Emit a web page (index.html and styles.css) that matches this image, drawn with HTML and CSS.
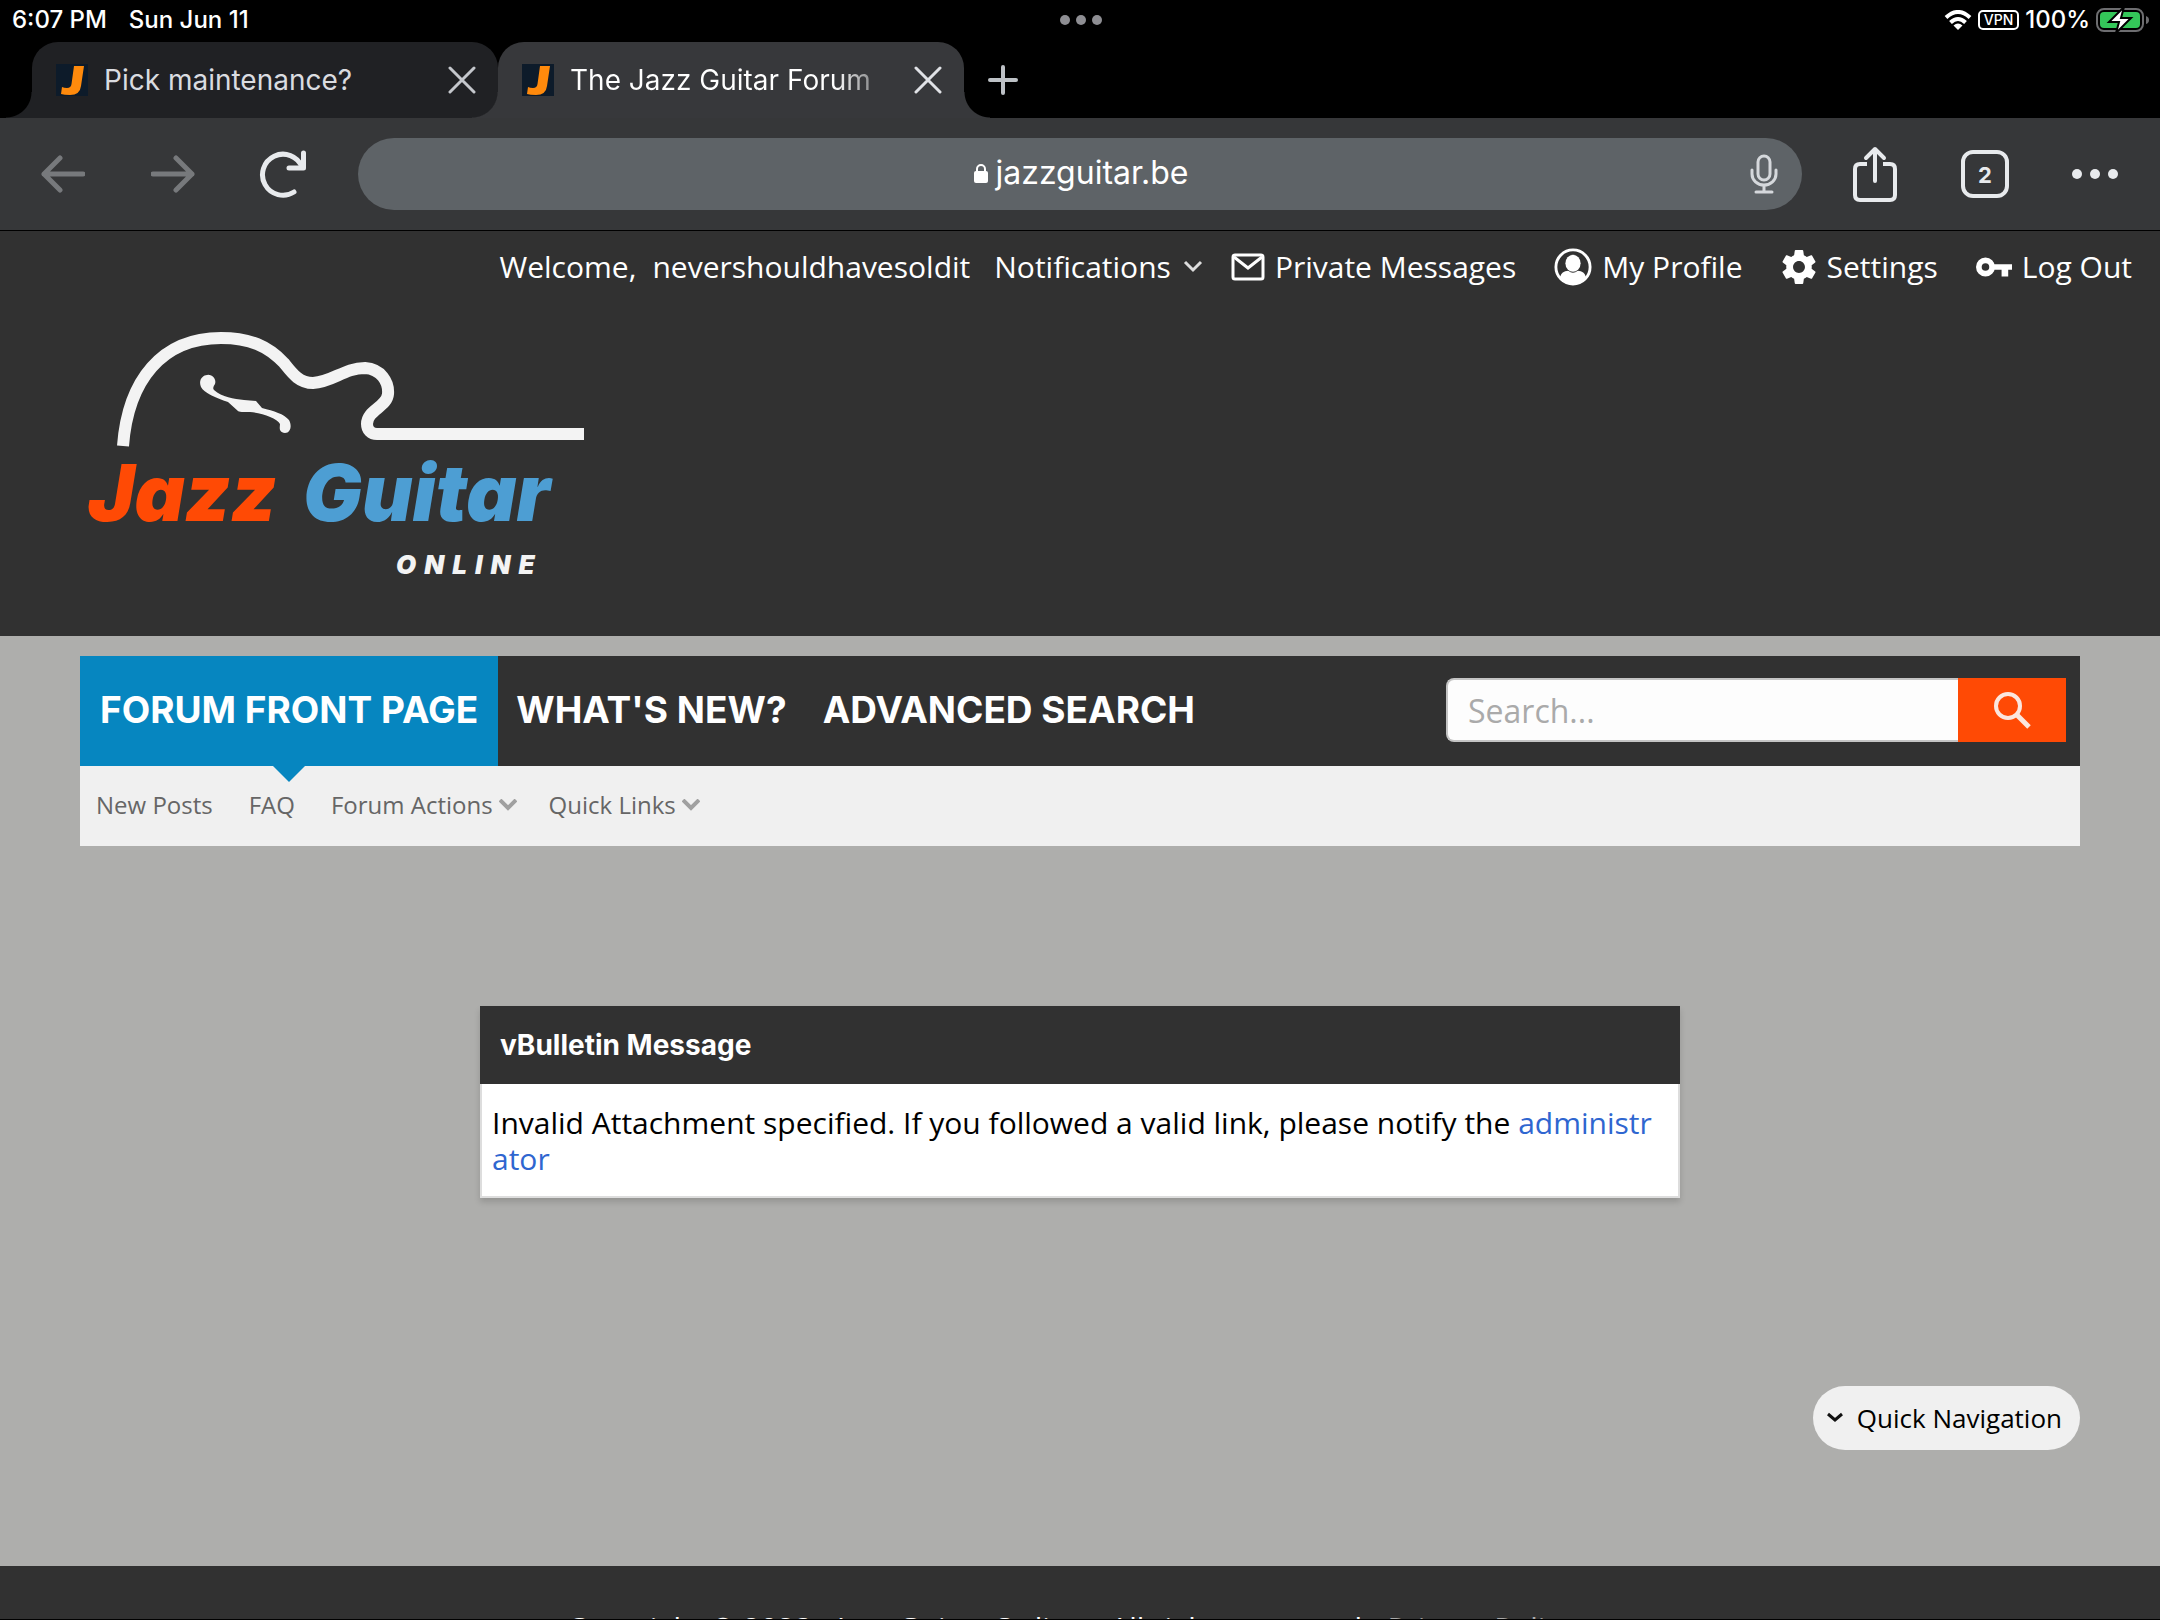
FILE: index.html
```html
<!DOCTYPE html>
<html lang="en">
<head>
<meta charset="utf-8">
<title>The Jazz Guitar Forum</title>
<meta name="viewport" content="width=device-width, initial-scale=1">
<link rel="stylesheet" href="styles.css">
</head>
<body>
<div class="device">
  <div class="status">
    <div class="status-left"><span>6:07 PM</span><span>Sun Jun 11</span></div>
    <svg class="multitask" viewBox="0 0 44 12" width="44" height="12" fill="#8e8e93"><circle cx="6" cy="6" r="5"/><circle cx="22" cy="6" r="5"/><circle cx="38" cy="6" r="5"/></svg>
    <div class="status-right">
      <svg viewBox="0 0 28 20" width="28" height="20" fill="none" stroke="#fff" stroke-width="4"><path d="M2 7.500Q14-3.500 26 7.500"/><path d="M6.500 12.500Q14 5.500 21.500 12.500"/><path d="M14 20l-4.500-4.500q4.500-4 9 0z" fill="#fff" stroke="none"/></svg>
      <span class="vpn">VPN</span>
      <span>100%</span>
      <svg viewBox="0 0 54 26" width="54" height="26"><rect x="1" y="2" width="46" height="22" rx="7" fill="none" stroke="#6d6d70" stroke-width="2"/><rect x="4" y="5" width="40" height="16" rx="4" fill="#34c759"/><path d="M50 9q3 1 3 4t-3 4z" fill="#6d6d70"/><path d="M28 0L13 15h10l-3 11 15-15H25z" fill="#fff" stroke="#000" stroke-width="2"/></svg>
    </div>
  </div>

  <div class="tabs">
    <div class="tab tab-first">
      <svg class="favicon" viewBox="0 0 32 32"><path fill="#0d1b2a" d="M0 0h32v32H0z"/><path fill="#ff8a0c" d="M18 2h10l-3 20q-1 9-11 9-6 0-9-1l1-7q2 1 5 1 4 0 4.500-4z"/></svg>
      <span class="tab-title">Pick maintenance?</span>
      <button class="icon-btn" aria-label="Close tab"><svg viewBox="0 0 28 28" width="28" height="28" fill="none" stroke="#c4c7cc" stroke-width="3" stroke-linecap="round"><path d="M2 2l24 24M26 2L2 26"/></svg></button>
    </div>
    <div class="tab tab-active">
      <svg class="favicon" viewBox="0 0 32 32"><path fill="#0d1b2a" d="M0 0h32v32H0z"/><path fill="#ff8a0c" d="M18 2h10l-3 20q-1 9-11 9-6 0-9-1l1-7q2 1 5 1 4 0 4.500-4z"/></svg>
      <span class="tab-title">The Jazz Guitar Forum</span>
      <button class="icon-btn" aria-label="Close tab"><svg viewBox="0 0 28 28" width="28" height="28" fill="none" stroke="#e0e2e6" stroke-width="3" stroke-linecap="round"><path d="M2 2l24 24M26 2L2 26"/></svg></button>
    </div>
    <button class="icon-btn new-tab" aria-label="New tab"><svg viewBox="0 0 30 30" width="30" height="30" fill="none" stroke="#bdc1c6" stroke-width="4" stroke-linecap="round"><path d="M15 2v26M2 15h26"/></svg></button>
  </div>

  <div class="toolbar">
    <button class="icon-btn tool" aria-label="Back"><svg viewBox="0 0 44 40" width="44" height="40" fill="none" stroke="#77797c" stroke-width="5" stroke-linecap="round" stroke-linejoin="round"><path d="M42 20H3M19 4L3 20l16 16"/></svg></button>
    <button class="icon-btn tool" aria-label="Forward"><svg viewBox="0 0 44 40" width="44" height="40" fill="none" stroke="#77797c" stroke-width="5" stroke-linecap="round" stroke-linejoin="round"><path d="M2 20h39M25 4l16 16-16 16"/></svg></button>
    <button class="icon-btn tool" aria-label="Reload"><svg viewBox="0 0 48 48" width="48" height="48" fill="none" stroke="#e8eaed" stroke-width="5" stroke-linecap="round" stroke-linejoin="round"><path d="M35 42A20.500 20.500 0 1 1 43 17"/><path d="M44.500 3v15H30"/></svg></button>
    <div class="omnibox">
      <span class="address"><svg viewBox="0 0 14 20" width="14" height="20"><rect x="0" y="8" width="14" height="12" rx="2" fill="#fff"/><path d="M3 9V6a4 4 0 0 1 8 0v3" fill="none" stroke="#fff" stroke-width="2"/></svg>jazzguitar.be</span>
      <button class="icon-btn mic" aria-label="Voice search"><svg viewBox="0 0 28 40" width="28" height="40" fill="none" stroke="#d5d8dc" stroke-width="3" stroke-linecap="round"><rect x="8" y="2" width="12" height="24" rx="6"/><path d="M2 16v4a12 11 0 0 0 24 0v-4M14 31v7M6 38h16"/></svg></button>
    </div>
    <button class="icon-btn tool" aria-label="Share"><svg viewBox="0 0 44 56" width="44" height="56" fill="none" stroke="#e8eaed" stroke-width="4" stroke-linecap="round" stroke-linejoin="round"><path d="M14 18H7q-5 0-5 5v26q0 5 5 5h30q5 0 5-5V23q0-5-5-5h-7" stroke-linecap="butt"/><path d="M22 35V3M13 12l9-9 9 9"/></svg></button>
    <button class="icon-btn tool" aria-label="2 open tabs"><span class="count">2</span></button>
    <button class="icon-btn tool" aria-label="Menu"><svg viewBox="0 0 46 10" width="46" height="10" fill="#e8eaed"><circle cx="5" cy="5" r="5"/><circle cx="23" cy="5" r="5"/><circle cx="41" cy="5" r="5"/></svg></button>
  </div>

  <div class="page">
    <header class="header">
      <nav class="user-links" aria-label="Account">
        <span class="welcome">Welcome, <a href="#">nevershouldhavesoldit</a></span>
        <a class="notes" href="#">Notifications<svg viewBox="0 0 20 14" width="20" height="14" fill="none" stroke="#ddd" stroke-width="3"><path d="M2 2l8 8 8-8"/></svg></a>
        <a class="user-link" href="#"><svg viewBox="0 0 34 28" width="34" height="28" fill="none" stroke="#fff" stroke-width="3"><rect x="2" y="2" width="30" height="24" rx="2"/><path d="M3 4l14 11L31 4"/></svg>Private Messages</a>
        <a class="user-link" href="#"><svg viewBox="0 0 40 40" width="38" height="40"><circle cx="20" cy="20" r="18" fill="none" stroke="#fff" stroke-width="3"/><ellipse cx="20" cy="16" rx="8" ry="9" fill="#fff"/><path d="M6 31q2-7 9-7 5 4 10 0 7 0 9 7-5 7-14 7T6 31z" fill="#fff"/></svg>My Profile</a>
        <a class="user-link" href="#"><svg viewBox="2 2 20 20" width="36" height="34" fill="#fff"><path d="M19.430 12.980c.04-.32.070-.64.070-.98s-.03-.66-.07-.98l2.110-1.650c.19-.15.240-.42.120-.64l-2-3.460c-.12-.22-.39-.3-.61-.22l-2.490 1c-.52-.4-1.080-.73-1.690-.98l-.38-2.650C14.460 2.180 14.250 2 14 2h-4c-.25 0-.46.180-.49.420l-.38 2.650c-.61.250-1.170.590-1.690.980l-2.490-1c-.23-.09-.49 0-.61.220l-2 3.460c-.13.220-.07.490.120.640l2.110 1.650c-.04.320-.07.650-.07.980s.03.660.070.980l-2.110 1.650c-.19.150-.24.420-.12.640l2 3.460c.12.220.390.300.610.220l2.490-1c.52.400 1.080.730 1.690.980l.38 2.650c.03.240.240.420.490.420h4c.25 0 .46-.18.490-.42l.38-2.650c.61-.25 1.170-.59 1.690-.98l2.490 1c.23.090.49 0 .61-.22l2-3.460c.12-.22.070-.49-.12-.64l-2.110-1.650zM12 15.500c-1.930 0-3.500-1.570-3.500-3.500s1.570-3.500 3.500-3.500 3.500 1.570 3.500 3.500-1.570 3.500-3.500 3.500z"/></svg>Settings</a>
        <a class="user-link" href="#"><svg viewBox="0 0 38 20" width="36" height="20"><circle cx="10" cy="10" r="7" fill="none" stroke="#fff" stroke-width="6"/><path d="M18 7h20v6h-4v7h-7v-7h-9z" fill="#fff"/></svg>Log Out</a>
      </nav>
      <a class="logo" href="#" aria-label="Jazz Guitar Online">
        <svg viewBox="80 326 520 260" width="520" height="260">
          <path d="M123 446C128 380 162 338 221 338C250 338 268 346 284 363C292 373 299 383 313 383C333 382 344 368 365 368C381 369 389 382 388 394C387 407 367 410 367 424C367 430 371 434 377 434H584" fill="none" stroke="#f3f3f3" stroke-width="12"/>
          <path d="M207 375a7 7 0 0 1 8 9q-3 4-1 6c8 7 20 9 30 10l12 1 6 7c12 3 22 6 27 12 3 5 2 13-4 13-7-1-5-6-5-9-3-6-18-11-30-12-6 0-12 0-12-1l-10-9c-12-4-24-9-27-15-3-7 2-12 6-12z" fill="#f3f3f3"/>
          <text class="logo-name" x="88" y="521" fill="#ff4a05">Jazz</text>
          <text class="logo-name" x="303" y="521" fill="#4d9ed3">Guitar</text>
          <text class="logo-sub" x="396" y="574" fill="#f3f3f3">ONLINE</text>
        </svg>
      </a>
    </header>

    <div class="nav-wrap">
      <nav class="main-nav" aria-label="Main">
        <a class="nav-link nav-active" href="#">FORUM FRONT PAGE</a>
        <a class="nav-link" href="#">WHAT'S NEW?</a>
        <a class="nav-link" href="#">ADVANCED SEARCH</a>
        <form class="search">
          <input type="text" placeholder="Search..." aria-label="Search">
          <button type="button" aria-label="Search"><svg viewBox="0 0 38 38" width="38" height="38" fill="none" stroke="#fbe6de" stroke-width="4"><circle cx="15" cy="15" r="12"/><path d="M23 23l13 13" stroke-width="5"/></svg></button>
        </form>
      </nav>
      <nav class="sub-nav" aria-label="Forum">
        <a href="#">New Posts</a>
        <a href="#">FAQ</a>
        <a href="#">Forum Actions<svg viewBox="0 0 18 12" width="18" height="12" fill="none" stroke="#a0a0a0" stroke-width="4"><path d="M1 1l8 8 8-8"/></svg></a>
        <a href="#">Quick Links<svg viewBox="0 0 18 12" width="18" height="12" fill="none" stroke="#a0a0a0" stroke-width="4"><path d="M1 1l8 8 8-8"/></svg></a>
      </nav>
    </div>

    <main class="content">
      <section class="message">
        <h2>vBulletin Message</h2>
        <p>Invalid Attachment specified. If you followed a valid link, please notify the <a href="#">administrator</a></p>
      </section>
      <button class="quick-nav"><svg viewBox="0 0 16 12" width="16" height="12" fill="none" stroke="#111" stroke-width="3"><path d="M1 2l7 6 7-6"/></svg>Quick Navigation</button>
    </main>

    <footer class="footer">Copyright © 2023 - Jazz Guitar Online - All rights reserved - <a href="#">Privacy Policy</a></footer>
  </div>
</div>
</body>
</html>
```
FILE: styles.css
```css
* { box-sizing: border-box; }

body {
  margin: 0;
  background: #000;
  font-family: "Open Sans", "Noto Sans", sans-serif;
}

a { color: inherit; text-decoration: none; }
svg { display: block; flex: none; }
button { font: inherit; cursor: pointer; }

.device {
  display: flex;
  flex-direction: column;
  height: 100vh;
  overflow: hidden;
  border-bottom: 1px solid #000;
}

.icon-btn {
  display: flex;
  align-items: center;
  justify-content: center;
  flex: none;
  padding: 0;
  border: 0;
  background: none;
  color: #e8eaed;
}

/* Status bar */
.status {
  display: grid;
  grid-template-columns: 1fr auto 1fr;
  align-items: center;
  flex: none;
  height: 42px;
  padding: 0 10px 2px 12px;
  color: #fff;
  font: 500 24px/36px Inter, sans-serif;
}
.status-left { display: flex; gap: 22px; }
.status-right { display: flex; align-items: center; justify-content: flex-end; gap: 6px; }
.vpn {
  padding: 0 4px;
  border: 2px solid #fff;
  border-radius: 5px;
  font-size: 14px;
  line-height: 16px;
}

/* Tab strip */
.tabs {
  display: flex;
  flex: none;
  height: 76px;
  padding-left: 32px;
  font: 28px/36px Inter, sans-serif;
}
.tab {
  position: relative;
  display: flex;
  align-items: center;
  width: 466px;
  padding: 0 22px 0 24px;
  border-radius: 26px;
  background: #202124;
  color: #dadce0;
}
.tab-first { border-bottom-left-radius: 0; }
.tab-active {
  border-radius: 26px 26px 0 0;
  background: #37383b;
  color: #fff;
}
.tab-first::before,
.tab-active::before,
.tab-active::after {
  content: "";
  position: absolute;
  right: 100%;
  bottom: 0;
  width: 26px;
  height: 26px;
  background: radial-gradient(circle at 0 0, transparent 25px, #37383b 26px);
}
.tab-first::before { background: radial-gradient(circle at 0 0, transparent 25px, #202124 26px); }
.tab-active::after {
  right: auto;
  left: 100%;
  background: radial-gradient(circle at 100% 0, transparent 25px, #37383b 26px);
}
.tab-active .tab-title {
  background: linear-gradient(90deg, #fff 88%, #8d8e90 100%);
  background-clip: text;
  color: transparent;
}
.favicon { width: 32px; height: 32px; }
.tab-title { margin: 0 auto 0 16px; white-space: nowrap; }
.new-tab { width: 78px; }

/* Toolbar */
.toolbar {
  display: flex;
  align-items: center;
  flex: none;
  height: 113px;
  padding: 0 10px 0 8px;
  border-bottom: 1px solid #000;
  background: #363739;
}
.tool { width: 110px; height: 72px; }
.omnibox {
  position: relative;
  display: flex;
  align-items: center;
  justify-content: center;
  flex: 1;
  height: 72px;
  margin: 0 18px 0 20px;
  border-radius: 36px;
  background: #5e6367;
  color: #fff;
  font: 32px/40px Inter, sans-serif;
}
.address { display: flex; align-items: center; gap: 8px; padding: 0 0 2px 2px; }
.mic { position: absolute; right: 24px; }
.count {
  width: 48px;
  height: 48px;
  border: 4px solid #e8eaed;
  border-radius: 12px;
  font: 700 22px/42px Inter, sans-serif;
}

/* Page */
.page {
  flex: 1;
  min-height: 0;
  overflow: hidden;
  background: #aeaeac;
}
.header { padding-bottom: 50px; background: #313131; }
.user-links {
  display: flex;
  justify-content: flex-end;
  align-items: center;
  height: 72px;
  padding-right: 28px;
  color: #fff;
  font-size: 30px;
  line-height: 40px;
  white-space: nowrap;
}
.welcome { display: flex; gap: 16px; margin-right: 24px; }
.notes { display: flex; align-items: center; gap: 12px; margin-right: 28px; }
.user-link { display: flex; align-items: center; gap: 10px; }
.user-link + .user-link { margin-left: 38px; }
.logo { display: block; width: 520px; margin: 23px 0 0 80px; }
.logo-name { font: italic 900 78px Inter, sans-serif; }
.logo-sub { font: italic 900 26px Inter, sans-serif; letter-spacing: 8px; }

.nav-wrap { margin: 20px 80px 0; }
.main-nav {
  display: flex;
  align-items: center;
  height: 110px;
  padding-right: 14px;
  background: #313131;
  color: #fff;
  font: 700 37px/108px Inter, sans-serif;
}
.nav-link { padding: 0 18px 2px; white-space: nowrap; }
.nav-active { position: relative; padding: 0 20px 2px; background: #0686c0; }
.nav-active::after {
  content: "";
  position: absolute;
  top: 100%;
  left: 50%;
  margin-left: -16px;
  border: 16px solid transparent;
  border-top-color: #0686c0;
  border-bottom: 0;
}
.search { display: flex; flex: 0 1 620px; margin: 0 0 2px auto; height: 64px; }
.search input {
  flex: 1;
  min-width: 0;
  padding: 0 20px;
  border: 2px solid #c4c4c4;
  border-right: 0;
  border-radius: 8px 0 0 8px;
  background: #fdfdfd;
  font: 32px "Open Sans", sans-serif;
}
.search input::placeholder { color: #aaa; }
.search button {
  display: flex;
  align-items: center;
  justify-content: center;
  width: 108px;
  padding: 0;
  border: 0;
  background: #ff4a05;
}
.sub-nav {
  display: flex;
  align-items: center;
  gap: 36px;
  height: 80px;
  padding: 0 16px 2px;
  background: #f0f0f0;
  color: #666;
  font-size: 24px;
  line-height: 32px;
}
.sub-nav a { display: flex; align-items: center; gap: 6px; }
.sub-nav svg { margin-right: -4px; }

.content {
  display: flex;
  flex-direction: column;
  padding: 160px 80px 116px;
}
.message {
  width: 60%;
  align-self: center;
  box-shadow: 0 4px 6px rgba(0, 0, 0, .15);
}
.message h2 {
  margin: 0;
  padding: 20px;
  background: #313131;
  color: #fff;
  font: 700 28px/38px Inter, sans-serif;
}
.message p {
  margin: 0;
  padding: 21px 10px 19px;
  border: 2px solid #ddd;
  border-top: 0;
  background: #fff;
  color: #000;
  font-size: 30px;
  line-height: 36px;
  word-break: break-all;
}
.message p a { color: #2f66d0; }
.quick-nav {
  display: flex;
  align-items: center;
  align-self: flex-end;
  gap: 14px;
  height: 64px;
  margin-top: 188px;
  padding: 0 18px 0 14px;
  border: 0;
  border-radius: 32px;
  background: #f0f0f0;
  color: #000;
  font-size: 26px;
}
.footer {
  padding: 44px 98px 44px 80px;
  background: #313131;
  color: #fff;
  font-size: 30px;
  line-height: 36px;
  text-align: center;
}
.footer a { color: #aaa; }
```
